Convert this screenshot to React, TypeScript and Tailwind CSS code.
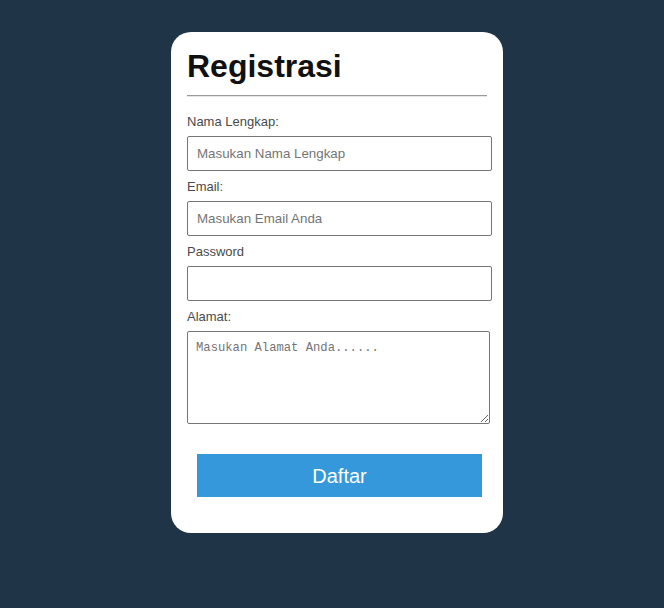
import React from 'react';

const labelCls = 'block h-4 leading-4 text-[13px] text-[#4a4a4a]';
const inputCls =
  'block w-[305px] h-[35px] px-[9px] border border-[#767676] rounded-[2px] bg-white text-[13.33px] text-black placeholder:text-[#757575] outline-none';

export default function App() {
  return (
    <div className="min-h-[608px] bg-[#1f3547] pt-8 font-['Liberation_Sans',Arial,sans-serif]">
      <div className="ml-[171px] w-[332px] h-[501px] bg-white rounded-[20px] p-4">
        <h1 className="text-[32px] leading-[37px] font-bold text-[#111]">Registrasi</h1>
        <div className="mt-[10px] border-t border-t-[#9a9a9a] border-b border-b-[#e6e6e6]" />

        <form onSubmit={(e) => e.preventDefault()}>
          <label className={`${labelCls} mt-[17px] mb-[6px]`}>Nama Lengkap:</label>
          <input type="text" placeholder="Masukan Nama Lengkap" className={inputCls} />

          <label className={`${labelCls} mt-[8px] mb-[6px]`}>Email:</label>
          <input type="email" placeholder="Masukan Email Anda" className={inputCls} />

          <label className={`${labelCls} mt-[8px] mb-[6px]`}>Password</label>
          <input type="password" className={inputCls} />

          <label className={`${labelCls} mt-[8px] mb-[6px]`}>Alamat:</label>
          <textarea
            placeholder="Masukan Alamat Anda......"
            className="block w-[303px] h-[93px] px-2 py-[8px] border border-[#767676] rounded-[2px] text-[12.2px] leading-[16px] font-['Liberation_Mono',monospace] placeholder:text-[#757575] outline-none"
          />

          <button
            type="submit"
            className="block ml-[10px] mt-[30px] w-[285px] h-[43px] bg-[#3498db] text-white text-[20px]"
          >
            Daftar
          </button>
        </form>
      </div>
    </div>
  );
}
